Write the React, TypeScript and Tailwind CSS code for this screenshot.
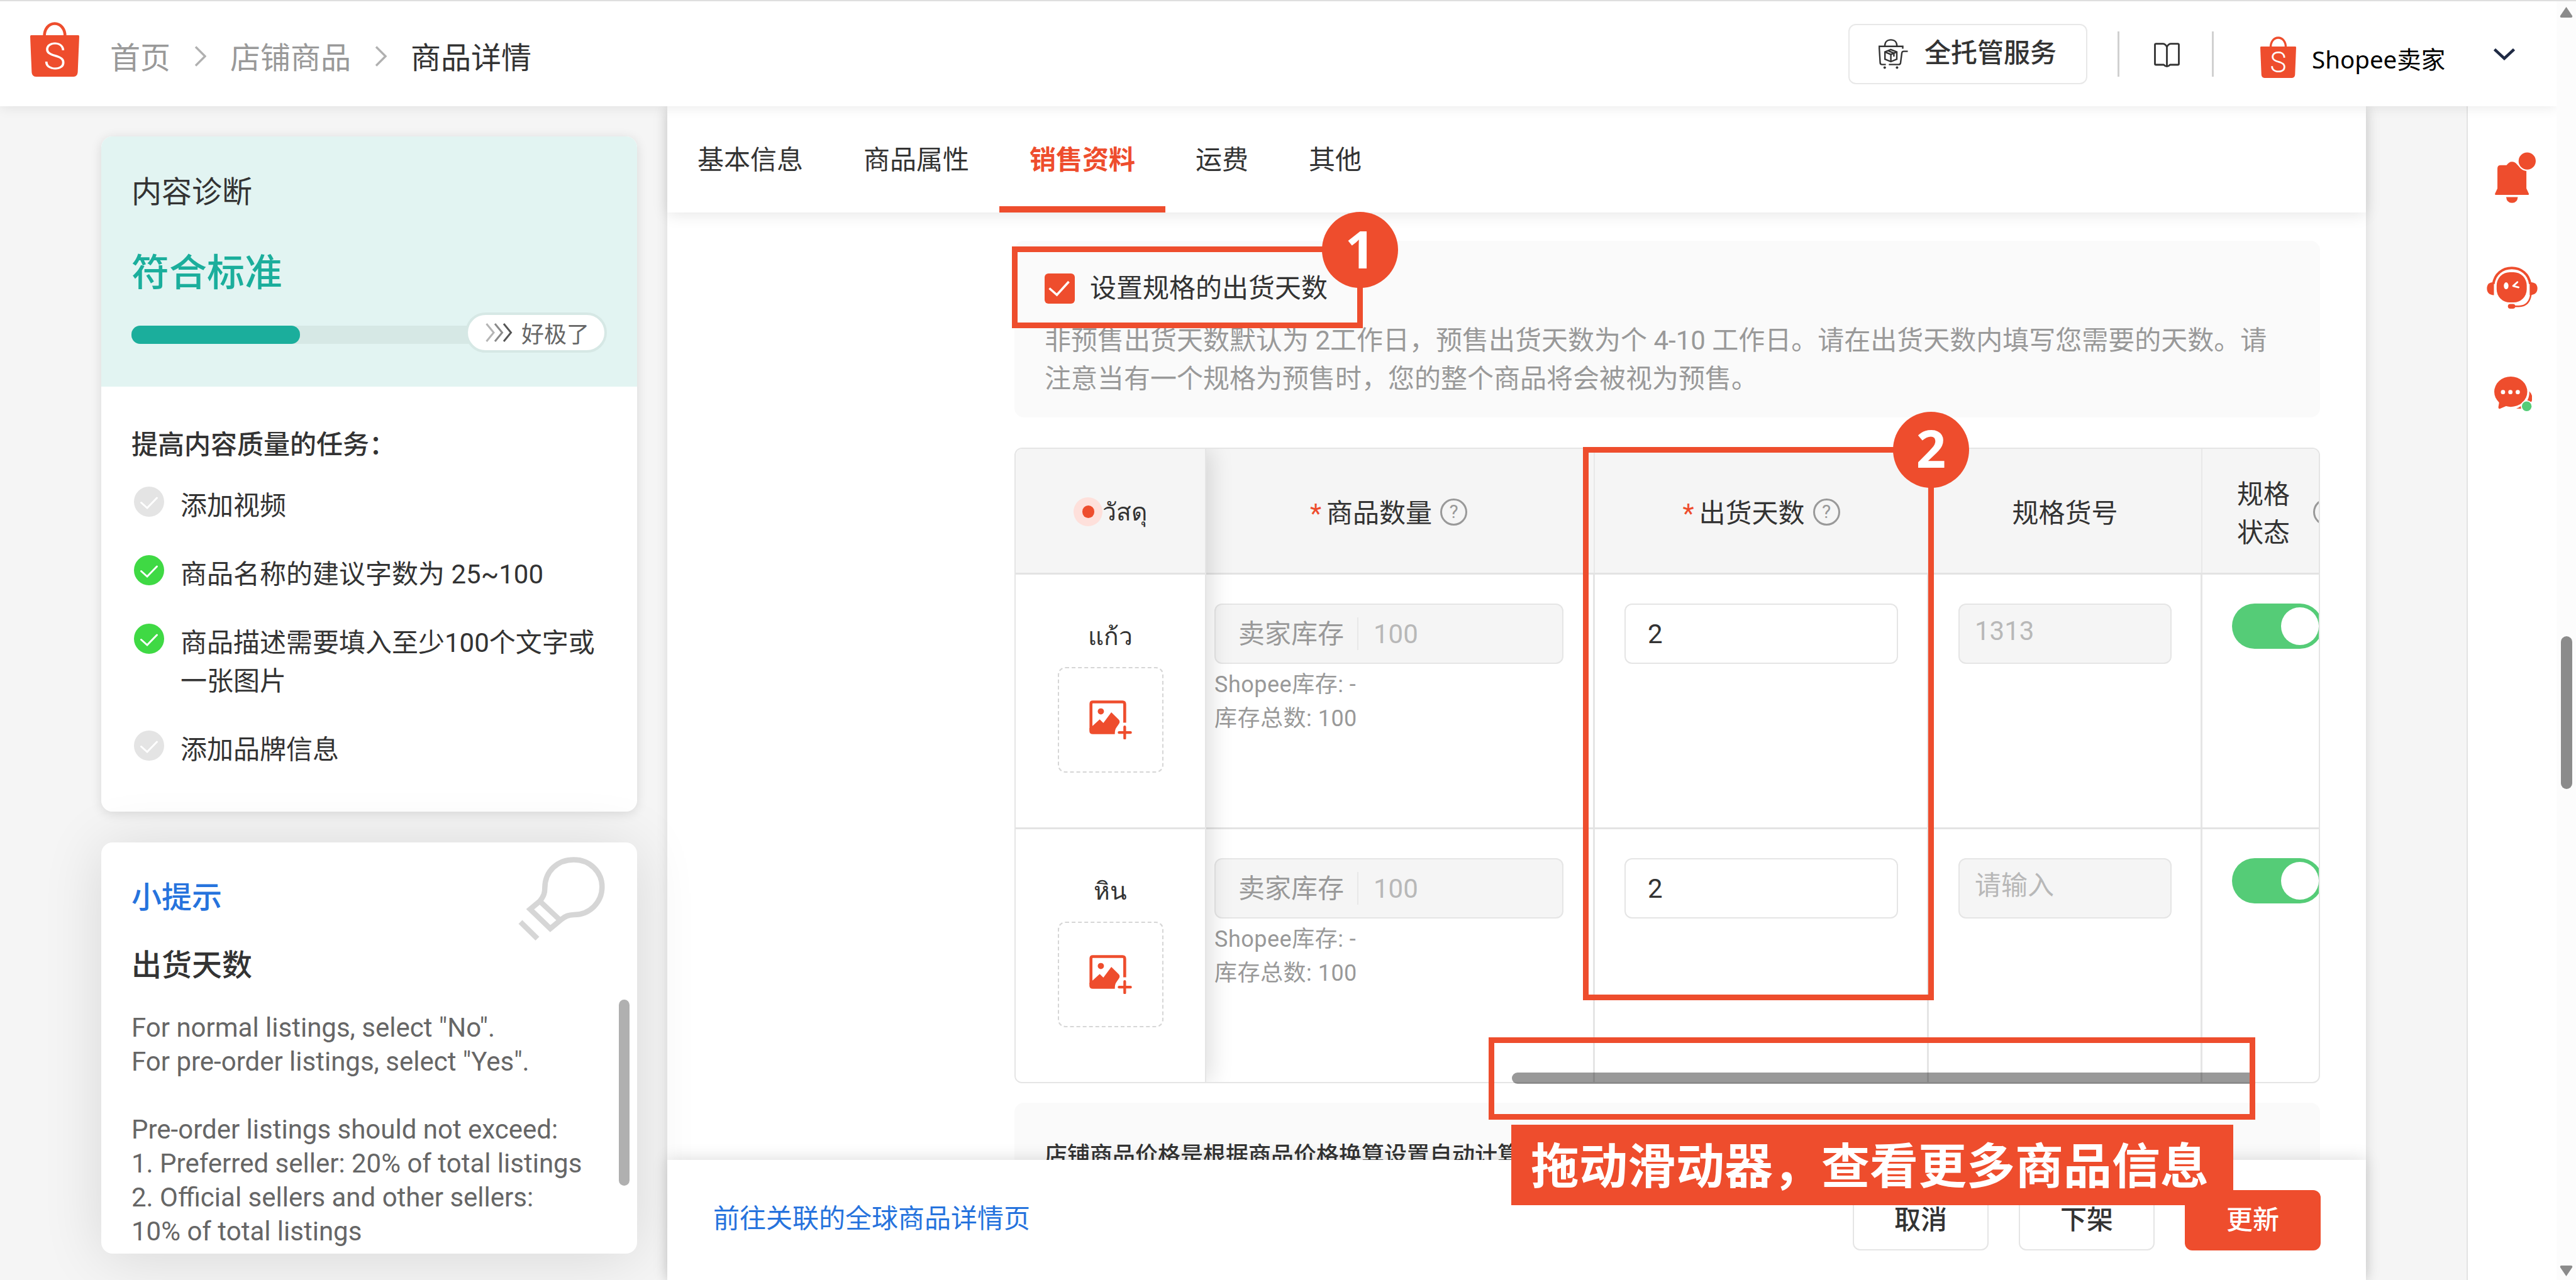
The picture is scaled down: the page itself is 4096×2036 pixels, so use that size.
import React from 'react';

const tabs = ['基本信息', '商品属性', '销售资料', '运费', '其他'];

const tasks = [
    { text: '添加视频', done: false },
    { text: '商品名称的建议字数为 25~100', done: true },
    { text: '商品描述需要填入至少100个文字或一张图片', done: true },
    { text: '添加品牌信息', done: false },
];

const variations = [
    { name: 'แก้ว', stock: '100', days: '2', sku: '1313' },
    { name: 'หิน', stock: '100', days: '2', sku: '请输入' },
];

function ShopeeLogo({ className }: { className: string }) {
    return (
        <svg className={className} viewBox="0 0 78 87" preserveAspectRatio="none">
            <path d="M22.5 23C22.5 11 29.5 2.5 39 2.5S55.5 11 55.5 23" fill="none" stroke="#ee4d2d" strokeWidth="4.6" />
            <path d="M1.5 21H76.5Q78 21 78 23L75.6 80Q75 86.5 69 87H9Q3 86.5 2.4 80L0 23Q0 21 1.5 21Z" fill="#ee4d2d" />
            <text x="39" y="75" textAnchor="middle" fontFamily="Roboto, sans-serif" fontWeight="300" fontSize="60" fill="#fff">S</text>
        </svg>
    );
}

function ServiceIcon() {
    return (
        <svg className="h-[48px] w-[47px] shrink-0" viewBox="0 0 47 48" fill="none" stroke="#333" strokeWidth="2.4">
            <path d="M10 11C10 5 14 1.4 19.6 1.4S29.2 5 29.2 11" />
            <path d="M38.5 15.5V11.8H1L2.6 38Q2.8 40.6 5.4 40.6H11.6" />
            <path d="M16.4 40.6H32Q34.6 40.6 35 38L37 22.5Q37.3 19.6 40 19.6H46.5" />
            <path d="M19.6 16.8L29 20.6V32.2L19.6 36L10.2 32.2V20.6Z" />
            <path d="M10.2 20.6L19.6 24.6L29 20.6M19.6 24.6V36M15 18.7L24.4 22.6V28" />
            <circle cx="9.8" cy="45.6" r="2" fill="#333" stroke="none" />
            <circle cx="29.4" cy="45.6" r="2" fill="#333" stroke="none" />
        </svg>
    );
}

function BookIcon() {
    return (
        <svg className="mt-[66px] ml-[55px] h-[39px] w-[41px] shrink-0" viewBox="0 0 41 39" fill="none" stroke="#333" strokeWidth="2.8" strokeLinejoin="round">
            <path d="M20.5 6.5Q18 1.6 14 1.6H3.2Q1.5 1.6 1.5 3.2V33.4Q1.5 35 3.2 35H15.5Q18 37.6 20.5 37.6T25.5 35H37.8Q39.5 35 39.5 33.4V3.2Q39.5 1.6 37.8 1.6H27Q23 1.6 20.5 6.5V37.4" />
        </svg>
    );
}

function BulbIcon() {
    return (
        <svg className="absolute top-[23px] right-[51px] h-[133px] w-[138px]" viewBox="0 0 138 133" fill="none" stroke="#d6d6d6" strokeWidth="8.5">
            <path d="M34.3 70.5C41 62 42.3 57 42.3 49.5C42.5 22 63 4.5 88.6 4.5C114 4.5 133.3 24 133.3 47.6C133.3 72 114 92 88.6 92C80 92.5 75 94 68.5 99.5L51 114L19 83.3L34.3 70.5L67 101" />
            <path d="M3.5 103.5L30.5 130" />
        </svg>
    );
}

function BellIcon() {
    return (
        <svg className="mt-[73px] ml-[43px] h-[81px] w-[65px]" viewBox="0 0 210 262" fill="#ee4d2d">
            <path d="M30 67H60Q72 49 88 49Q103 49 113 62L130 80Q142 94 162 96V187L174 213Q177 220 170 220H4Q-1 220 1 213L13 187V84Q13 67 30 67Z" />
            <circle cx="166" cy="46" r="50" fill="#fff" />
            <circle cx="166" cy="46" r="44" />
            <path d="M58 231H118Q115 261 88 261Q61 261 58 231Z" />
        </svg>
    );
}

function RobotIcon() {
    return (
        <svg className="mt-[101px] ml-[30px] h-[67px] w-[81px]" viewBox="0 0 260 217" fill="#ee4d2d">
            <path d="M33 90C40 38 80 7 128 7S216 38 223 90" fill="none" stroke="#ee4d2d" strokeWidth="13" />
            <path d="M36 80V147Q0 145 0 113Q0 80 36 80Z" />
            <path d="M220 80V147Q260 145 260 113Q260 80 220 80Z" />
            <path d="M227 140Q220 204 165 205H140" fill="none" stroke="#ee4d2d" strokeWidth="8" />
            <rect x="108" y="193" width="38" height="24" rx="12" />
            <rect x="50" y="29" width="155" height="156" rx="68" />
            <ellipse cx="99" cy="99" rx="12" ry="18" fill="#fff" />
            <path d="M157 80L135 100L163 107" fill="none" stroke="#fff" strokeWidth="9" strokeLinecap="round" strokeLinejoin="round" />
        </svg>
    );
}

function ChatIcon() {
    return (
        <svg className="mt-[108px] ml-[42px] h-[55px] w-[60px]" viewBox="0 0 194 178" fill="#ee4d2d">
            <path d="M180 75Q204 100 191 130H166Q183 104 180 75Z" />
            <path d="M113 164Q130 160 140 148L146 166Z" />
            <ellipse cx="85" cy="78" rx="85" ry="78" />
            <path d="M26 128L21 158Q21 168 30 165L66 150Z" />
            <circle cx="45" cy="80" r="11" fill="#fff" />
            <circle cx="83" cy="80" r="11" fill="#fff" />
            <circle cx="121" cy="80" r="11" fill="#fff" />
            <circle cx="167" cy="153" r="31" fill="#fff" />
            <circle cx="167" cy="153" r="25" fill="#55cc77" />
        </svg>
    );
}

function ImagePlusIcon() {
    return (
        <svg className="h-[62px] w-[68px]" viewBox="0 0 219 201" fill="#ee4d2d">
            <path d="M182 115V20Q182 8 171 8H18Q8 8 8 18V150" fill="none" stroke="#ee4d2d" strokeWidth="15" />
            <path d="M0 145L15 133L53 98L72 117L113 62L150 98Q160 108 153 120L138 142Q131 152 131 174H18Q0 174 0 158Z" />
            <circle cx="59" cy="57" r="16" />
            <path d="M182 137V195M153 166H212" stroke="#ee4d2d" strokeWidth="14" strokeLinecap="round" />
        </svg>
    );
}

function Chevron() {
    return (
        <svg className="mt-[10px] h-[33px] w-[19px]" viewBox="0 0 19 33" fill="none" stroke="#b0b0b0" strokeWidth="3.4">
            <path d="M2 1.5L17 16.5L2 31.5" />
        </svg>
    );
}

function HelpIcon() {
    return (
        <span className="flex h-[43px] w-[43px] shrink-0 items-center justify-center rounded-full border-3 border-[#999] text-[30px] leading-[30px] text-[#999]">?</span>
    );
}

function TaskCheck({ done }: { done: boolean }) {
    return (
        <svg className="ml-[4px] h-[48px] w-[48px] shrink-0" viewBox="0 0 48 48">
            <circle cx="24" cy="24" r="24" fill={done ? '#3fd944' : '#e4e4e4'} />
            <path d="M11.5 25.5L21 34L36.5 18" fill="none" stroke="#fff" strokeWidth="3" strokeLinecap="round" />
        </svg>
    );
}

function Header() {
    return (
        <header className="relative z-20 flex h-[169px] shrink-0 items-start border-t-2 border-[#dedede] bg-white shadow-[0_3px_18px_rgba(0,0,0,0.08)]">
            <ShopeeLogo className="mt-[33px] ml-[48px] h-[87px] w-[78px]" />
            <nav className="mt-[61px] ml-[49px] flex gap-[38px] text-[48px] leading-[60px] text-[#999]">
                <span>首页</span>
                <Chevron />
                <span>店铺商品</span>
                <Chevron />
                <span className="text-[#333]">商品详情</span>
            </nav>
            <div className="ml-auto flex items-start pr-[66px]">
                <button className="mt-[36px] flex h-[96px] w-[380px] items-center gap-[26px] rounded-[12px] border-2 border-[#e8e8e8] pl-[46px] text-[42px] leading-[60px] font-medium text-[#333]">
                    <ServiceIcon />
                    <span className="-mt-[3px] whitespace-nowrap">全托管服务</span>
                </button>
                <div className="mt-[48px] ml-[48px] h-[72px] w-[3px] bg-[#d0d0d0]"></div>
                <BookIcon />
                <div className="mt-[48px] ml-[51px] h-[72px] w-[3px] bg-[#d0d0d0]"></div>
                <ShopeeLogo className="mt-[56px] ml-[74px] h-[66px] w-[57px]" />
                <div className="mt-[62px] ml-[25px] w-[289px] font-['Noto_Sans','Noto_Sans_CJK_SC',sans-serif] text-[38.5px] leading-[60px] text-black">Shopee卖家</div>
                <svg className="mt-[75px] h-[19px] w-[34px]" viewBox="0 0 34 19" fill="none" stroke="#1f2a44" strokeWidth="4.5">
                    <path d="M1.5 1.5L17 16L32.5 1.5" />
                </svg>
            </div>
        </header>
    );
}

function Diagnosis() {
    return (
        <section className="h-[1074px] shrink-0 overflow-hidden rounded-[18px] bg-white">
            <div className="h-[398px] bg-[#e2f4f2] px-[48px] pt-[59px]">
                <h3 className="text-[48px] leading-[60px] text-[#333]">内容诊断</h3>
                <div className="mt-[57px] text-[60px] leading-[84px] font-medium text-[#1bae9c]">符合标准</div>
                <div className="mt-[20px] flex items-center">
                    <div className="mt-[6px] h-[29px] w-[560px] rounded-full bg-[#d6e8e5]">
                        <div className="h-[29px] w-[268px] rounded-[14px] bg-[#1bae9c]"></div>
                    </div>
                    <div className="z-10 -ml-[29px] flex h-[64px] w-[225px] items-center gap-[14px] rounded-full border-4 border-[#d6e8e5] bg-white pl-[28px] text-[36px] leading-[48px] text-[#666]">
                        <svg className="h-[30px] w-[43px]" viewBox="0 0 43 30" fill="none" strokeWidth="3">
                            <path d="M1.5 1L13 15L1.5 29" stroke="#b5b5b5" />
                            <path d="M15 1L26.500 15L15 29" stroke="#8a8a8a" />
                            <path d="M29 1L40.500 15L29 29" stroke="#555" />
                        </svg>
                        <span className="mt-[7px] whitespace-nowrap">好极了</span>
                    </div>
                </div>
            </div>
            <div className="px-[48px] pt-[63px] text-[42px] text-[#333]">
                <h4 className="leading-[60px] font-medium">提高内容质量的任务：</h4>
                <ul className="mt-[36px] flex flex-col gap-[48px]">
                    {tasks.map((task) => (
                        <li key={task.text} className="flex gap-[26px] leading-[61px]">
                            <TaskCheck done={task.done} />
                            <span className="w-[670px]">{task.text}</span>
                        </li>
                    ))}
                </ul>
            </div>
        </section>
    );
}

function Tips() {
    return (
        <section className="relative h-[654px] shrink-0 rounded-[18px] bg-white px-[48px] pt-[58px] shadow-[0_6px_96px_rgba(0,0,0,0.12)]">
            <BulbIcon />
            <h3 className="text-[48px] leading-[60px] font-medium text-[#2673dd]">小提示</h3>
            <h4 className="mt-[48px] text-[48px] leading-[60px] font-medium text-[#333]">出货天数</h4>
            <div className="mt-[42px] text-[42px] leading-[54px] whitespace-nowrap text-[#666]">
                <p>For normal listings, select "No".</p>
                <p>For pre-order listings, select "Yes".</p>
                <p className="mt-[54px]">Pre-order listings should not exceed:</p>
                <p>1. Preferred seller: 20% of total listings</p>
                <p>2. Official sellers and other sellers:</p>
                <p>10% of total listings</p>
            </div>
            <div className="absolute top-[250px] right-[12px] h-[296px] w-[17px] rounded-full bg-[#b0b0b0]"></div>
        </section>
    );
}

function VariationTable() {
    return (
        <div className="relative mt-[48px] h-[1011px]">
            <div className="flex h-full overflow-hidden rounded-[12px] border-2 border-[#e5e5e5] text-[42px] leading-[61px] text-[#333]">
                {/* Kolom tetap */}
                <div className="z-10 w-[303px] shrink-0 border-r-2 border-[#e5e5e5] bg-white shadow-[6px_0_36px_rgba(0,0,0,0.14)]">
                    <div className="flex h-[200px] items-center border-b-3 border-[#e3e3e3] bg-[#f5f5f5] pt-[3px] pl-[92px]">
                        <span className="flex h-[46px] w-[46px] items-center justify-center rounded-full bg-[#fee0db]">
                            <span className="h-[20px] w-[19px] rounded-full bg-[#ee4d2d]"></span>
                        </span>
                        <span className="pt-[3px] text-[39px]">วัสดุ</span>
                    </div>
                    {variations.map((v) => (
                        <div key={v.name} className="flex h-[405px] flex-col items-center border-b-3 border-[#e3e3e3] pt-[69px]">
                            <div className="text-[39px] leading-[60px]">{v.name}</div>
                            <div className="mt-[18px] flex h-[168px] w-[168px] items-center justify-center rounded-[12px] border-2 border-dashed border-[#d6d6d6]">
                                <ImagePlusIcon />
                            </div>
                        </div>
                    ))}
                </div>

                <div className="flex-1">
                    <div className="flex h-[200px] border-b-3 border-[#e3e3e3] bg-[#f5f5f5]">
                        <div className="flex w-[618px] shrink-0 items-center justify-center gap-[13px] border-r-2 border-[#e8e8e8] pt-[3px] pr-[36px]">
                            <span className="pt-[5px] whitespace-nowrap"><span className="mr-[8px] text-[#ee4d2d]">*</span>商品数量</span>
                            <HelpIcon />
                        </div>
                        <div className="flex w-[531px] shrink-0 items-center justify-center gap-[13px] border-r-2 border-[#e8e8e8] pt-[3px]">
                            <span className="pt-[5px] whitespace-nowrap"><span className="mr-[8px] text-[#ee4d2d]">*</span>出货天数</span>
                            <HelpIcon />
                        </div>
                        <div className="flex w-[435px] shrink-0 items-center justify-center border-r-2 border-[#e8e8e8] pt-[8px]">规格货号</div>
                        <div className="flex shrink-0 items-center gap-[37px] pt-[3px] pl-[55px]">
                            <span className="w-[84px] pt-[5px]">规格状态</span>
                            <HelpIcon />
                        </div>
                    </div>
                    {variations.map((v) => (
                        <div key={v.name} className="flex h-[405px] border-b-3 border-[#e3e3e3]">
                            <div className="w-[618px] shrink-0 border-r-3 border-[#e5e5e5] pt-[46px] pl-[13px]">
                                <div className="flex h-[96px] w-[555px] items-center rounded-[12px] border-2 border-[#e5e5e5] bg-[#f5f5f5] pl-[36px] text-[#999]">
                                    <span>卖家库存</span>
                                    <span className="ml-[21px] h-[52px] w-[2px] bg-[#e8e8e8]"></span>
                                    <span className="ml-[24px] text-[#b8b8b8]">{v.stock}</span>
                                </div>
                                <div className="mt-[6px] text-[36px] leading-[54px] tracking-[0.5px] text-[#999]">
                                    <p>Shopee库存: -</p>
                                    <p>库存总数: {v.stock}</p>
                                </div>
                            </div>
                            <div className="w-[531px] shrink-0 border-r-3 border-[#e5e5e5] pt-[46px] pl-[47px]">
                                <div className="flex h-[96px] w-[435px] items-center rounded-[12px] border-2 border-[#e5e5e5] pl-[35px]">{v.days}</div>
                            </div>
                            <div className="w-[435px] shrink-0 border-r-3 border-[#e5e5e5] pt-[46px] pl-[47px]">
                                <div className="flex h-[96px] w-[339px] items-center rounded-[12px] border-2 border-[#e5e5e5] bg-[#f5f5f5] pb-[9px] pl-[24px] text-[#b8b8b8]">{v.sku}</div>
                            </div>
                            <div className="shrink-0 pt-[46px] pl-[47px]">
                                <div className="flex h-[72px] w-[144px] items-center justify-end rounded-full bg-[#55cc77] pr-[6px]">
                                    <div className="h-[60px] w-[60px] rounded-full bg-white"></div>
                                </div>
                            </div>
                        </div>
                    ))}
                </div>
            </div>
            <div className="absolute top-[994px] left-[791px] z-10 h-[18px] w-[1182px] rounded-full bg-black/40"></div>
        </div>
    );
}

function Footer() {
    return (
        <footer className="relative z-10 flex h-[191px] shrink-0 items-start bg-white pt-[48px] pr-[72px] pl-[73px] shadow-[0_-3px_24px_rgba(0,0,0,0.12)]">
            <a className="mt-[16px] text-[42px] leading-[60px] text-[#2673dd]">前往关联的全球商品详情页</a>
            <div className="ml-auto flex gap-[48px] text-[42px] leading-[60px] font-medium text-[#333]">
                <button className="h-[96px] w-[216px] rounded-[12px] border-2 border-[#e5e5e5]">取消</button>
                <button className="h-[96px] w-[216px] rounded-[12px] border-2 border-[#e5e5e5]">下架</button>
                <button className="h-[96px] w-[216px] rounded-[12px] bg-[#ee4d2d] text-white">更新</button>
            </div>
        </footer>
    );
}

function Callouts() {
    return (
        <div className="font-['Noto_Sans','Noto_Sans_CJK_SC',sans-serif] font-bold text-white">
            <div className="absolute top-[392px] left-[1609px] z-30 h-[130px] w-[558px] border-9 border-[#ee4d2d]"></div>
            <div className="absolute top-[337px] left-[2102px] z-30 flex h-[121px] w-[121px] justify-center rounded-full bg-[#ee4d2d] text-[83px] leading-[115px]">1</div>
            <div className="absolute top-[711px] left-[2517px] z-30 h-[880px] w-[558px] border-9 border-[#ee4d2d]"></div>
            <div className="absolute top-[655px] left-[3010px] z-30 flex h-[121px] w-[121px] justify-center rounded-full bg-[#ee4d2d] text-[83px] leading-[113px]">2</div>
            <div className="absolute top-[1650px] left-[2367px] z-30 h-[131px] w-[1219px] border-9 border-[#ee4d2d]"></div>
            <div className="absolute top-[1789px] left-[2403px] z-30 h-[128px] w-[1148px] bg-[#ee4d2d] pl-[31px] font-['Noto_Sans_CJK_SC',sans-serif] text-[77px] leading-[122px] whitespace-nowrap">拖动滑动器，查看更多商品信息</div>
        </div>
    );
}

export default function App() {
    return (
        <div className="relative flex h-[2036px] w-[4096px] overflow-hidden bg-[#f5f5f5] font-['Roboto','Noto_Sans_CJK_SC',sans-serif]">
            <div className="flex w-[4065px] shrink-0 flex-col">
                <Header />
                <div className="flex h-[1867px]">
                    <aside className="ml-[161px] flex w-[852px] shrink-0 flex-col gap-[49px] pt-[48px]">
                        <div className="rounded-[18px] shadow-[0_3px_18px_rgba(0,0,0,0.12)]">
                            <Diagnosis />
                        </div>
                        <Tips />
                    </aside>

                    <main className="ml-[48px] flex w-[2701px] shrink-0 flex-col bg-white shadow-[0_3px_18px_rgba(0,0,0,0.12)]">
                        <div className="relative z-10 flex h-[169px] shrink-0 bg-white text-[42px] shadow-[0_3px_24px_rgba(0,0,0,0.1)]">
                            {tabs.map((tab) => (
                                <div
                                    key={tab}
                                    className={`px-[48px] leading-[171px] ${tab === '销售资料' ? 'border-b-10 border-[#ee4d2d] font-bold text-[#ee4d2d]' : 'text-[#333]'}`}
                                >
                                    {tab}
                                </div>
                            ))}
                        </div>

                        <div className="min-h-0 flex-1 overflow-hidden pt-[45px] pl-[552px]">
                            <div className="w-[2076px]">
                                <div className="h-[281px] rounded-[15px] bg-[#fafafa] px-[48px] pt-[46px] text-[42px] leading-[60px]">
                                    <label className="flex items-start gap-[24px] text-[#333]">
                                        <span className="mt-[6px] flex h-[48px] w-[48px] items-center justify-center rounded-[6px] bg-[#ee4d2d]">
                                            <svg className="h-[48px] w-[48px]" viewBox="0 0 48 48" fill="none" stroke="#fff" strokeWidth="3.6">
                                                <path d="M7.500 23.500L19.500 34L38.500 13" />
                                            </svg>
                                        </span>
                                        设置规格的出货天数
                                    </label>
                                    <p className="mt-[22px] leading-[61px] whitespace-nowrap text-[#999]">
                                        非预售出货天数默认为 2工作日，预售出货天数为个 4-10 工作日。请在出货天数内填写您需要的天数。请
                                        <br />
                                        注意当有一个规格为预售时，您的整个商品将会被视为预售。
                                    </p>
                                </div>

                                <VariationTable />

                                <div className="mt-[31px] h-[300px] rounded-[15px] bg-[#fafafa] px-[48px] pt-[57px] text-[36px] leading-[54px] font-medium text-[#333]">
                                    店铺商品价格是根据商品价格换算设置自动计算
                                </div>
                            </div>
                        </div>
                        <Footer />
                    </main>

                    {/* Bar ikon kanan */}
                    <div className="ml-auto w-[143px] border-l-2 border-[#e3e3e3] bg-white">
                        <BellIcon />
                        <RobotIcon />
                        <ChatIcon />
                    </div>
                </div>
            </div>

            {/* Scrollbar halaman */}
            <div className="relative z-20 flex w-[31px] shrink-0 flex-col items-center border-t-2 border-[#dedede] bg-[#fcfcfc]">
                <svg className="mt-[9px] h-[17px] w-[21px]" viewBox="0 0 21 17" fill="#8b8b8b">
                    <path d="M10.500 0L20 14Q21 17 18 17H3Q0 17 1 14Z" />
                </svg>
                <div className="mt-[984px] h-[243px] w-[18px] rounded-full bg-[#8b8b8b]"></div>
                <svg className="mt-auto mb-[6px] h-[17px] w-[21px]" viewBox="0 0 21 17" fill="#8b8b8b">
                    <path d="M10.500 17L20 3Q21 0 18 0H3Q0 0 1 3Z" />
                </svg>
            </div>

            <Callouts />
        </div>
    );
}
